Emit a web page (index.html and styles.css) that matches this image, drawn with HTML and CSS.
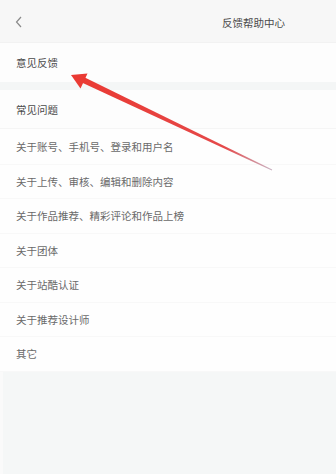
FILE: index.html
```html
<!DOCTYPE html>
<html lang="zh-CN">
<head>
    <meta charset="UTF-8">
    <meta name="viewport" content="width=device-width, initial-scale=1.0">
    <title>反馈帮助中心</title>
    <link rel="stylesheet" href="styles.css">
</head>
<body>
    <div class="page">
        <div class="header">
            <svg class="back" width="8" height="12" viewBox="0 0 8 12">
                <path d="M6 1 L1.5 6 L6 11" fill="none" stroke="#8a8a8a" stroke-width="1.2"/>
            </svg>
            <div class="title">反馈帮助中心</div>
        </div>
        <div class="row feedback">意见反馈</div>
        <div class="row section">常见问题</div>
        <div class="list">
            <div class="item">关于账号、手机号、登录和用户名</div>
            <div class="item">关于上传、审核、编辑和删除内容</div>
            <div class="item">关于作品推荐、精彩评论和作品上榜</div>
            <div class="item">关于团体</div>
            <div class="item">关于站酷认证</div>
            <div class="item">关于推荐设计师</div>
            <div class="item">其它</div>
        </div>
        <div class="rest"></div>

        <!-- annotation arrow drawn over the screenshot -->
        <svg class="arrow" width="336" height="474" viewBox="0 0 336 474">
            <defs>
                <linearGradient id="shaft" x1="83" y1="80" x2="272" y2="170" gradientUnits="userSpaceOnUse">
                    <stop offset="0" stop-color="#ea3a33"/>
                    <stop offset="0.75" stop-color="#e5494a"/>
                    <stop offset="1" stop-color="#c9b3c3"/>
                </linearGradient>
            </defs>
            <polygon points="81.7,82.6 84.3,77.2 272.2,169.6 271.8,170.4" fill="url(#shaft)"/>
            <polygon points="71,75 87.5,73.5 80.5,88.5" fill="#ea3a33"/>
        </svg>
    </div>
</body>
</html>
```

FILE: styles.css
```css
body {
    margin: 0;
    font-family: "Noto Sans CJK SC", "Noto Sans", sans-serif;
    background-color: #f4f6f6;
    color: #555;
}
.page {
    position: relative;
    width: 336px;
    height: 474px;
    overflow: hidden;
    display: flex;
    flex-direction: column;
}
.header {
    height: 42px;
    background-color: #f7f7f7;
    display: flex;
    align-items: center;
    border-bottom: 1px solid #f2f2f2;
}
.back {
    margin-left: 15px;
    margin-top: 2px;
}
.title {
    margin-left: 199px;
    font-size: 10.5px;
    color: #4a4a4a;
    margin-top: 2px;
}
.row {
    background-color: #fdfdfd;
    display: flex;
    align-items: center;
    padding-left: 16px;
    font-size: 10.5px;
    color: #4a4a4a;
}
.feedback {
    height: 39px;
    margin-bottom: 8px;
}
.section {
    height: 38px;
    border-bottom: 1px solid #f5f5f5;
}
.list {
    background-color: #fefefe;
    padding-top: 1px;
}
.item {
    height: 34.5px;
    display: flex;
    align-items: center;
    padding-left: 16px;
    font-size: 10.5px;
    color: #6a6a6a;
    border-bottom: 1px solid #f8f8f8;
    box-sizing: border-box;
}
.rest {
    flex: 1;
    background-color: #f5f7f7;
    border-left: 3px solid #fafafa;
}
.arrow {
    position: absolute;
    left: 0;
    top: 0;
}
```
